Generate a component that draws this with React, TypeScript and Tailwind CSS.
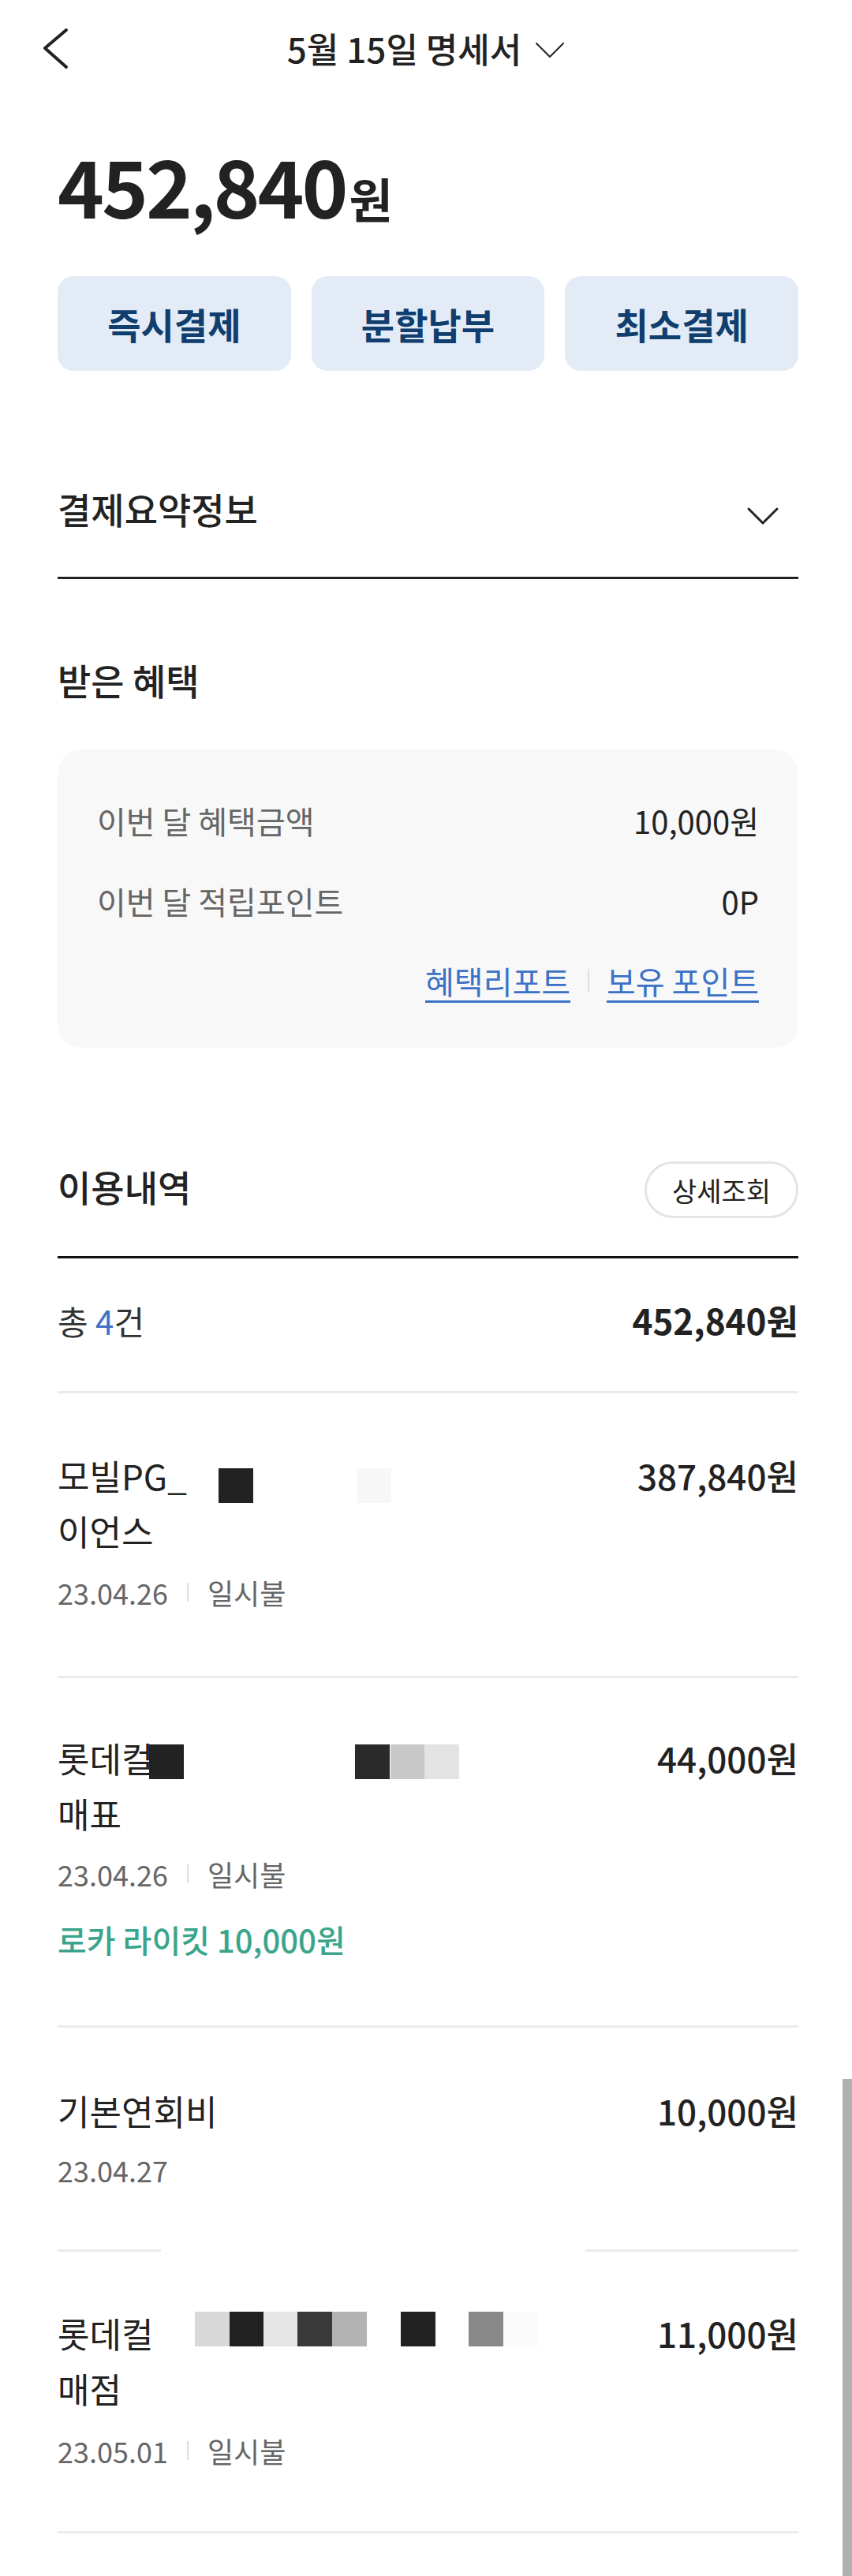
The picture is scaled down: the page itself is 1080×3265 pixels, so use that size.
import React from 'react';

type Cell = { x: number; c: string };

interface UsageItem {
  id: string;
  lines: string[];
  amount: string;
  date: string;
  type?: string;
  benefit?: string;
  mosaic: { top: number; cells: Cell[] };
  pad: string;
  dateGap: string;
}

const CELL = 'absolute h-[44px] w-[44px]';

const items: UsageItem[] = [
  {
    id: 'a',
    lines: ['모빌PG_', '이언스'],
    amount: '387,840원',
    date: '23.04.26',
    type: '일시불',
    mosaic: { top: 26, cells: [{ x: 204, c: 'bg-[#222222]' }, { x: 379, c: 'bg-[#f7f7f7]' }] },
    pad: 'pt-[69px] pb-[81px]',
    dateGap: 'mt-[18px]',
  },
  {
    id: 'b',
    lines: ['롯데컬', '매표'],
    amount: '44,000원',
    date: '23.04.26',
    type: '일시불',
    benefit: '로카 라이킷 10,000원',
    mosaic: {
      top: 18,
      cells: [
        { x: 116, c: 'bg-[#222222]' },
        { x: 377, c: 'bg-[#2a2a2a]' },
        { x: 422, c: 'bg-[#c8c8c8]' },
        { x: 465, c: 'bg-[#e3e3e3]' },
      ],
    },
    pad: 'pt-[66px] pb-[81px]',
    dateGap: 'mt-[17px]',
  },
  {
    id: 'c',
    lines: ['기본연회비'],
    amount: '10,000원',
    date: '23.04.27',
    mosaic: { top: 0, cells: [] },
    pad: 'pt-[70px] pb-[76px]',
    dateGap: 'mt-[15px]',
  },
  {
    id: 'd',
    lines: ['롯데컬', '매점'],
    amount: '11,000원',
    date: '23.05.01',
    type: '일시불',
    mosaic: {
      top: 8,
      cells: [
        { x: 174, c: 'bg-[#d8d8d8]' },
        { x: 218, c: 'bg-[#222222]' },
        { x: 261, c: 'bg-[#e6e6e6]' },
        { x: 304, c: 'bg-[#3a3a3a]' },
        { x: 348, c: 'bg-[#b3b3b3]' },
        { x: 435, c: 'bg-[#222222]' },
        { x: 521, c: 'bg-[#888888]' },
        { x: 565, c: 'bg-[#fbfbfb]' },
      ],
    },
    pad: 'pt-[68px] pb-[77px]',
    dateGap: 'mt-[19px]',
  },
];

const ChevronDown: React.FC<{ className?: string; w: number; h: number; stroke: number }> = ({ className, w, h, stroke }) => (
  <svg className={className} width={w} height={h} viewBox={`0 0 ${w} ${h}`} fill="none">
    <path
      d={`M${stroke} ${stroke} L${w / 2} ${h - stroke} L${w - stroke} ${stroke}`}
      stroke="#222222"
      strokeWidth={stroke}
      strokeLinecap="round"
      strokeLinejoin="round"
    />
  </svg>
);

const Divider: React.FC<{ split?: boolean }> = ({ split }) =>
  split ? (
    <div className="flex h-[3px] justify-between">
      <div className="w-[131px] bg-[#ebebeb]" />
      <div className="w-[270px] bg-[#ebebeb]" />
    </div>
  ) : (
    <div className="h-[3px] bg-[#ebebeb]" />
  );

const UsageRow: React.FC<{ item: UsageItem }> = ({ item }) => (
  <div className={item.pad}>
    <div className="flex justify-between">
      <div className="text-[44px] leading-[70px] text-[#222222]">
        {item.lines.map((line, i) => (
          <div key={i} className="relative">
            {line}
            {i === 0 &&
              item.mosaic.cells.map((cell) => (
                <span
                  key={cell.x}
                  className={`${CELL} ${cell.c}`}
                  style={{ left: cell.x, top: item.mosaic.top }}
                />
              ))}
          </div>
        ))}
      </div>
      <div className="text-[44px] font-medium leading-[70px] text-[#222222]">{item.amount}</div>
    </div>
    <div className={`flex items-center text-[36px] leading-[50px] text-[#666666] ${item.dateGap}`}>
      <span>{item.date}</span>
      {item.type && (
        <>
          <span className="mx-[24px] h-[24px] w-[2px] bg-[#dddddd]" />
          <span>{item.type}</span>
        </>
      )}
    </div>
    {item.benefit && (
      <div className="mt-[30px] text-[40px] font-medium leading-[56px] text-[#3aa58a]">{item.benefit}</div>
    )}
  </div>
);

export default function App() {
  return (
    <div className="relative min-h-[3265px] w-[1080px] bg-white font-['Noto_Sans_CJK_KR','Noto_Sans',sans-serif] text-[#222222]">
      {/* header */}
      <div className="grid h-[122px] grid-cols-[1fr_auto_1fr] items-center">
        <div className="pl-[50px]">
          <svg width="40" height="66" viewBox="0 0 40 66" fill="none">
            <path d="M34 10 L7 33 L34 57" stroke="#222222" strokeWidth="4" strokeLinecap="round" strokeLinejoin="round" />
          </svg>
        </div>
        <div className="flex items-center">
          <span className="text-[44px] font-medium leading-[60px]">5월 15일 명세서</span>
          <ChevronDown className="ml-[17px] mt-[4px]" w={38} h={21} stroke={2} />
        </div>
        <div />
      </div>

      <div className="pl-[73px] pr-[68px]">
        {/* amount */}
        <div className="mt-[62px] flex items-baseline font-bold leading-[100px]">
          <span className="text-[100px] tracking-[-3px]">452,840</span>
          <span className="ml-[4px] text-[60px]">원</span>
        </div>

        {/* actions */}
        <div className="mt-[49px] grid grid-cols-3 gap-[26px]">
          {['즉시결제', '분할납부', '최소결제'].map((label) => (
            <button
              key={label}
              className="h-[120px] rounded-[20px] bg-[#e3ecf6] text-[46px] font-bold text-[#0f3e6f]"
            >
              {label}
            </button>
          ))}
        </div>

        {/* summary */}
        <div className="mt-[109px] border-b-[3px] border-[#222222] pb-[22px]">
          <div className="flex h-[130px] items-center justify-between">
            <span className="text-[46px] font-medium">결제요약정보</span>
            <ChevronDown className="mr-[24px] mt-[20px]" w={42} h={24} stroke={3} />
          </div>
        </div>

        {/* benefits */}
        <h2 className="mt-[97px] text-[46px] font-medium leading-[60px]">받은 혜택</h2>
        <div className="mt-[59px] rounded-[30px] bg-[#f8f8f8] px-[50px] pb-[57px] pt-[62px] text-[40px] leading-[56px]">
          <div className="flex justify-between">
            <span className="text-[#666666]">이번 달 혜택금액</span>
            <span>10,000원</span>
          </div>
          <div className="mt-[46px] flex justify-between">
            <span className="text-[#666666]">이번 달 적립포인트</span>
            <span>0P</span>
          </div>
          <div className="mt-[45px] flex items-center justify-end text-[#3b72c6]">
            <span className="underline decoration-[3px] underline-offset-[8px]">혜택리포트</span>
            <span className="mx-[22px] h-[30px] w-[2px] bg-[#e0e0e0]" />
            <span className="underline decoration-[3px] underline-offset-[8px]">보유 포인트</span>
          </div>
        </div>

        {/* usage */}
        <div className="mt-[144px] flex h-[72px] items-center justify-between">
          <h2 className="pb-[10px] text-[46px] font-medium">이용내역</h2>
          <button className="h-[72px] rounded-full border-[3px] border-[#e4e4e4] px-[32px] text-[34px] text-[#222222]">
            상세조회
          </button>
        </div>
        <div className="mt-[48px] h-[3px] bg-[#111111]" />
        <div className="flex h-[168px] items-center justify-between pb-[12px]">
          <span className="text-[42px] text-[#333333]">
            총 <span className="text-[#3b72c6]">4</span>건
          </span>
          <span className="text-[44px] font-bold">452,840원</span>
        </div>
        <Divider />
        {items.map((item) => (
          <React.Fragment key={item.id}>
            <UsageRow item={item} />
            <Divider split={item.id === 'c'} />
          </React.Fragment>
        ))}
      </div>

      {/* scroll indicator */}
      <div className="absolute right-0 top-[2635px] h-[630px] w-[12px] bg-[#b0b0b0]" />
    </div>
  );
}
